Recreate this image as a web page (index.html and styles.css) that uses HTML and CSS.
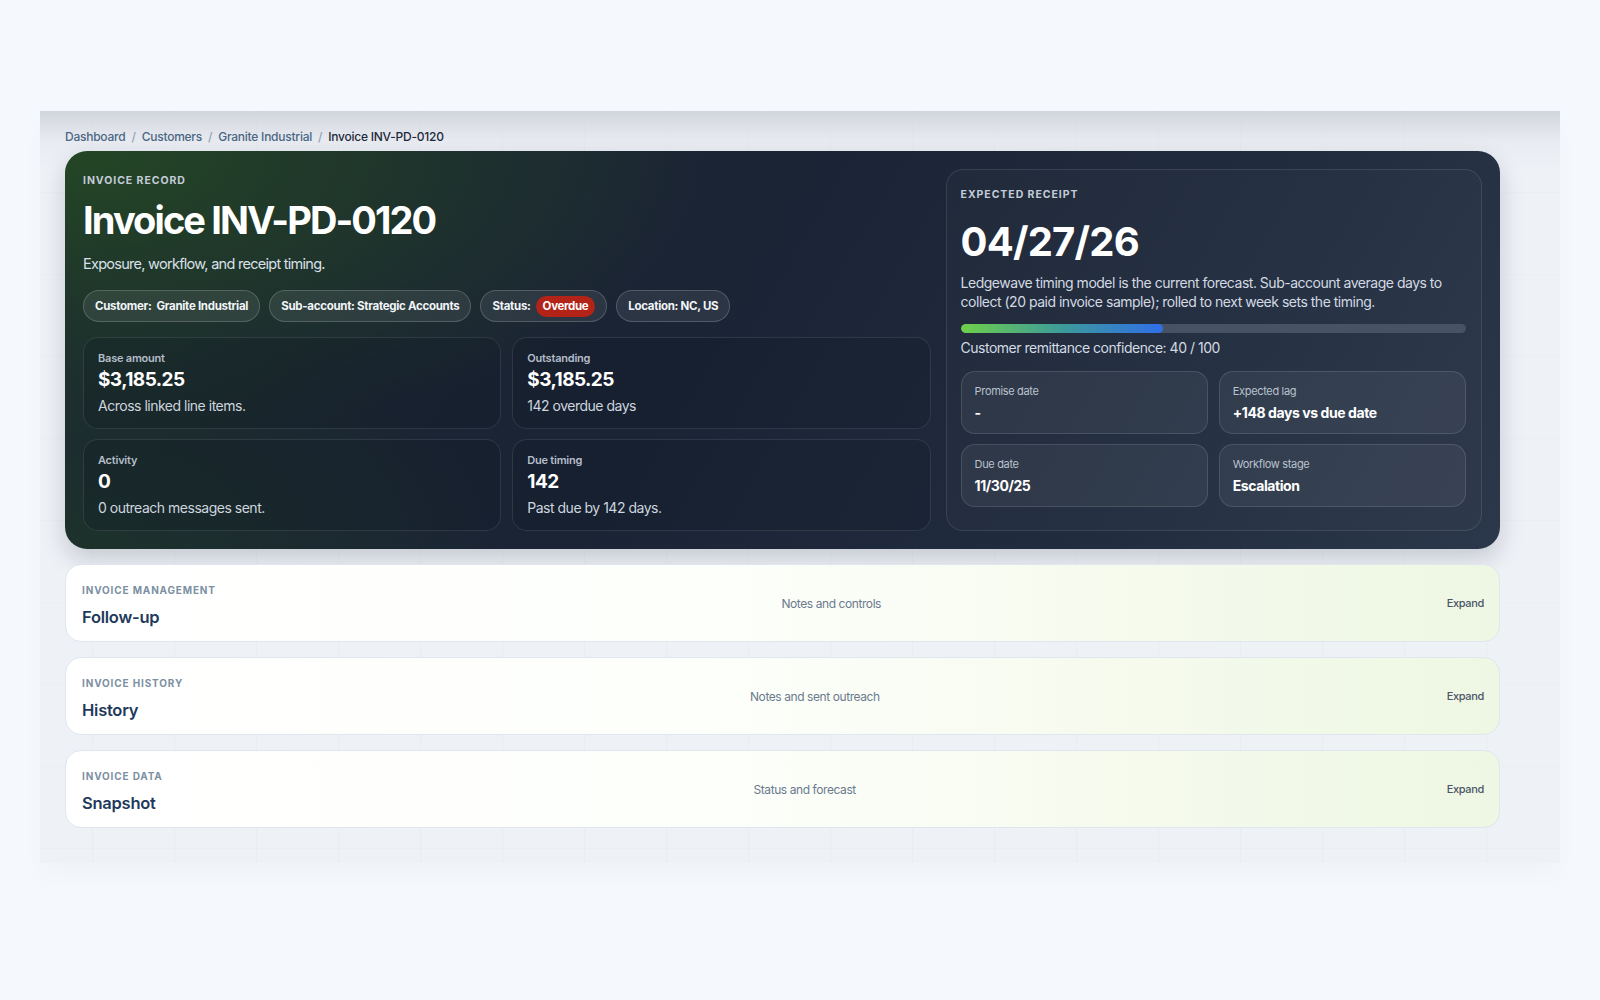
FILE: index.html
```html
<!DOCTYPE html>
<html lang="en">
<head>
<meta charset="utf-8">
<title>Invoice INV-PD-0120</title>
<link rel="stylesheet" href="styles.css">
</head>
<body>
<div class="page">
  <main class="panel">
    <nav class="crumbs">
      <a href="#">Dashboard</a><span class="sep">/</span>
      <a href="#">Customers</a><span class="sep">/</span>
      <a href="#">Granite Industrial</a><span class="sep">/</span>
      <span class="current">Invoice INV-PD-0120</span>
    </nav>

    <section class="hero">
      <div class="hero-main">
        <div class="eyebrow">INVOICE RECORD</div>
        <h1 class="title">Invoice INV-PD-0120</h1>
        <p class="subtitle">Exposure, workflow, and receipt timing.</p>
        <div class="chips">
          <span class="chip">Customer:&nbsp; Granite Industrial</span>
          <span class="chip">Sub-account: Strategic Accounts</span>
          <span class="chip">Status: <span class="badge">Overdue</span></span>
          <span class="chip">Location: NC, US</span>
        </div>
        <div class="stats">
          <div class="stat">
            <div class="stat-label">Base amount</div>
            <div class="stat-value">$3,185.25</div>
            <div class="stat-sub">Across linked line items.</div>
          </div>
          <div class="stat">
            <div class="stat-label">Outstanding</div>
            <div class="stat-value">$3,185.25</div>
            <div class="stat-sub">142 overdue days</div>
          </div>
          <div class="stat">
            <div class="stat-label">Activity</div>
            <div class="stat-value">0</div>
            <div class="stat-sub">0 outreach messages sent.</div>
          </div>
          <div class="stat">
            <div class="stat-label">Due timing</div>
            <div class="stat-value">142</div>
            <div class="stat-sub">Past due by 142 days.</div>
          </div>
        </div>
      </div>

      <aside class="receipt">
        <div class="eyebrow">EXPECTED RECEIPT</div>
        <div class="receipt-date">04/27/26</div>
        <p class="receipt-desc">Ledgewave timing model is the current forecast. Sub-account average days to collect (20 paid invoice sample); rolled to next week sets the timing.</p>
        <div class="meter"><div class="meter-fill" style="width: 40%"></div></div>
        <div class="confidence">Customer remittance confidence: 40 / 100</div>
        <div class="minis">
          <div class="mini">
            <div class="mini-label">Promise date</div>
            <div class="mini-value">-</div>
          </div>
          <div class="mini">
            <div class="mini-label">Expected lag</div>
            <div class="mini-value">+148 days vs due date</div>
          </div>
          <div class="mini">
            <div class="mini-label">Due date</div>
            <div class="mini-value">11/30/25</div>
          </div>
          <div class="mini">
            <div class="mini-label">Workflow stage</div>
            <div class="mini-value">Escalation</div>
          </div>
        </div>
      </aside>
    </section>

    <section class="accordions">
      <div class="acc">
        <div class="acc-head">
          <div class="acc-kicker">INVOICE MANAGEMENT</div>
          <div class="acc-title">Follow-up</div>
        </div>
        <div class="acc-note">Notes and controls</div>
        <div class="acc-toggle">Expand</div>
      </div>
      <div class="acc">
        <div class="acc-head">
          <div class="acc-kicker">INVOICE HISTORY</div>
          <div class="acc-title">History</div>
        </div>
        <div class="acc-note">Notes and sent outreach</div>
        <div class="acc-toggle">Expand</div>
      </div>
      <div class="acc">
        <div class="acc-head">
          <div class="acc-kicker">INVOICE DATA</div>
          <div class="acc-title">Snapshot</div>
        </div>
        <div class="acc-note">Status and forecast</div>
        <div class="acc-toggle">Expand</div>
      </div>
    </section>
  </main>
</div>
</body>
</html>
```

FILE: styles.css
```css
* { box-sizing: border-box; }

html, body {
  margin: 0;
  padding: 0;
  background: #f5f8fc;
  font-family: Inter, "Noto Sans", "Liberation Sans", sans-serif;
  color: #0f172a;
}

.page {
  padding: 111px 40px 0 40px;
  min-height: 1000px;
}

.panel {
  background:
    linear-gradient(180deg, rgba(200,204,212,0.75) 0px, rgba(226,229,235,0.5) 30px, rgba(238,241,246,0) 60px),
    linear-gradient(90deg, rgba(148,163,184,0.055) 1px, transparent 1px),
    linear-gradient(0deg, rgba(148,163,184,0.04) 1px, transparent 1px),
    #eef1f6;
  background-size: auto, 82px 82px, 82px 82px, auto;
  background-position: 0 0, 52px 0, 0 0, 0 0;
  padding: 17px 60px 35px 25px;
  box-shadow: 0 14px 18px -6px rgba(238,241,246,0.9);
}

/* breadcrumbs */
.crumbs {
  display: flex;
  align-items: center;
  gap: 6px;
  font-size: 12px;
  font-weight: 500;
  letter-spacing: -0.02em;
  height: 16px;
  margin-bottom: 7px;
}
.crumbs a { color: #4b6684; text-decoration: none; }
.crumbs .sep { color: #94a3b8; }
.crumbs .current { color: #1e293b; font-weight: 500; }

/* hero */
.hero {
  display: grid;
  grid-template-columns: 1.58fr 1fr;
  gap: 15px;
  padding: 18px;
  border-radius: 22px;
  color: #fff;
  background:
    radial-gradient(ellipse 45% 75% at 0% 0%, rgba(36,72,36,0.95) 0%, rgba(36,72,36,0) 100%),
    radial-gradient(ellipse 30% 60% at 0% 100%, rgba(30,56,40,0.7) 0%, rgba(30,56,40,0) 100%),
    linear-gradient(120deg, #1b2531 0%, #1b2435 45%, #212c3f 75%, #2b374a 100%);
  box-shadow: 0 10px 24px rgba(15,23,42,0.18);
}

.eyebrow {
  font-size: 10.5px;
  font-weight: 700;
  letter-spacing: 0.09em;
  color: #c3ccd8;
  line-height: 14px;
}

.hero-main { padding-top: 5px; display: flex; flex-direction: column; }

.title {
  margin: 8px 0 0 0;
  font-size: 38px;
  line-height: 48px;
  font-weight: 700;
  letter-spacing: -0.05em;
  color: #fff;
}

.subtitle {
  margin: 10px 0 0 0;
  font-size: 14.5px;
  line-height: 20px;
  letter-spacing: -0.05em;
  color: #d9e0e8;
}

.chips {
  display: flex;
  gap: 9px;
  margin-top: 16px;
}
.chip {
  display: inline-flex;
  align-items: center;
  gap: 5px;
  height: 32px;
  padding: 0 11px;
  border-radius: 999px;
  background: rgba(255,255,255,0.08);
  border: 1px solid rgba(255,255,255,0.18);
  font-size: 11.5px;
  font-weight: 700;
  letter-spacing: -0.025em;
  color: #f1f5f9;
  white-space: nowrap;
}
.badge {
  display: inline-flex;
  align-items: center;
  height: 21px;
  padding: 0 7px;
  border-radius: 999px;
  background: #b42318;
  color: #fff;
  font-weight: 700;
  letter-spacing: -0.03em;
}

.stats {
  margin-top: 15px;
  display: grid;
  grid-template-columns: 1fr 1fr;
  grid-auto-rows: 92px;
  gap: 10px 11px;
}
.stat {
  border-radius: 15px;
  border: 1px solid rgba(255,255,255,0.1);
  background: rgba(12,20,32,0.2);
  padding: 13px 14px;
}
.stat-label {
  font-size: 11px;
  font-weight: 600;
  letter-spacing: -0.02em;
  color: #b4bdc9;
  line-height: 14px;
}
.stat-value {
  margin-top: 2px;
  font-size: 19px;
  font-weight: 700;
  letter-spacing: -0.03em;
  line-height: 26px;
  color: #fff;
}
.stat-sub {
  margin-top: 3px;
  font-size: 14px;
  line-height: 20px;
  letter-spacing: -0.035em;
  color: #cdd5df;
}

/* receipt */
.receipt {
  border-radius: 17px;
  border: 1px solid rgba(255,255,255,0.1);
  background: rgba(255,255,255,0.02);
  padding: 18px 15px 15px 14px;
  display: flex;
  flex-direction: column;
}
.receipt-date {
  margin-top: 16px;
  font-size: 40px;
  line-height: 48px;
  font-weight: 700;
  letter-spacing: -0.02em;
  color: #fff;
}
.receipt-desc {
  margin: 7px 0 0 0;
  font-size: 14px;
  line-height: 19px;
  letter-spacing: -0.035em;
  color: #d3dae3;
}
.meter {
  margin-top: 13px;
  height: 9px;
  border-radius: 999px;
  background: #475263;
  overflow: hidden;
}
.meter-fill {
  height: 100%;
  border-radius: 999px;
  background: linear-gradient(90deg, #6fd04a 0%, #3d9a9a 50%, #2f6ee8 100%);
}
.confidence {
  margin-top: 5px;
  font-size: 14px;
  line-height: 19px;
  letter-spacing: -0.035em;
  color: #d3dae3;
}
.minis {
  margin-top: 14px;
  display: grid;
  grid-template-columns: 1fr 1fr;
  grid-auto-rows: 63px;
  gap: 10px 11px;
}
.mini {
  border-radius: 14px;
  border: 1px solid rgba(255,255,255,0.12);
  background: rgba(255,255,255,0.055);
  padding: 12px 13px;
}
.mini-label {
  font-size: 11px;
  line-height: 14px;
  letter-spacing: -0.03em;
  color: #b9c2ce;
}
.mini-value {
  margin-top: 5px;
  font-size: 14px;
  line-height: 19px;
  font-weight: 700;
  letter-spacing: -0.03em;
  color: #fff;
}

/* accordions */
.accordions {
  margin-top: 15px;
  display: flex;
  flex-direction: column;
  gap: 15px;
}
.acc {
  height: 78px;
  display: flex;
  align-items: center;
  justify-content: space-between;
  padding: 0 15px 0 16px;
  border-radius: 16px;
  border: 1px solid #dfe6ee;
  background: linear-gradient(90deg, #ffffff 0%, #fdfffb 45%, #f7fbef 70%, #eef7e3 100%);
}
.acc-head { display: flex; flex-direction: column; margin-top: 4px; }
.acc-kicker {
  font-size: 10px;
  font-weight: 700;
  letter-spacing: 0.085em;
  color: #7c8fa3;
  line-height: 14px;
}
.acc-title {
  margin-top: 10px;
  font-size: 16.5px;
  font-weight: 600;
  letter-spacing: -0.015em;
  color: #1f3a5c;
  line-height: 20px;
}
.acc-note {
  font-size: 12px;
  letter-spacing: -0.035em;
  color: #6b7a8d;
}
.acc-toggle {
  font-size: 11px;
  font-weight: 500;
  letter-spacing: -0.03em;
  color: #4a5568;
}
```
